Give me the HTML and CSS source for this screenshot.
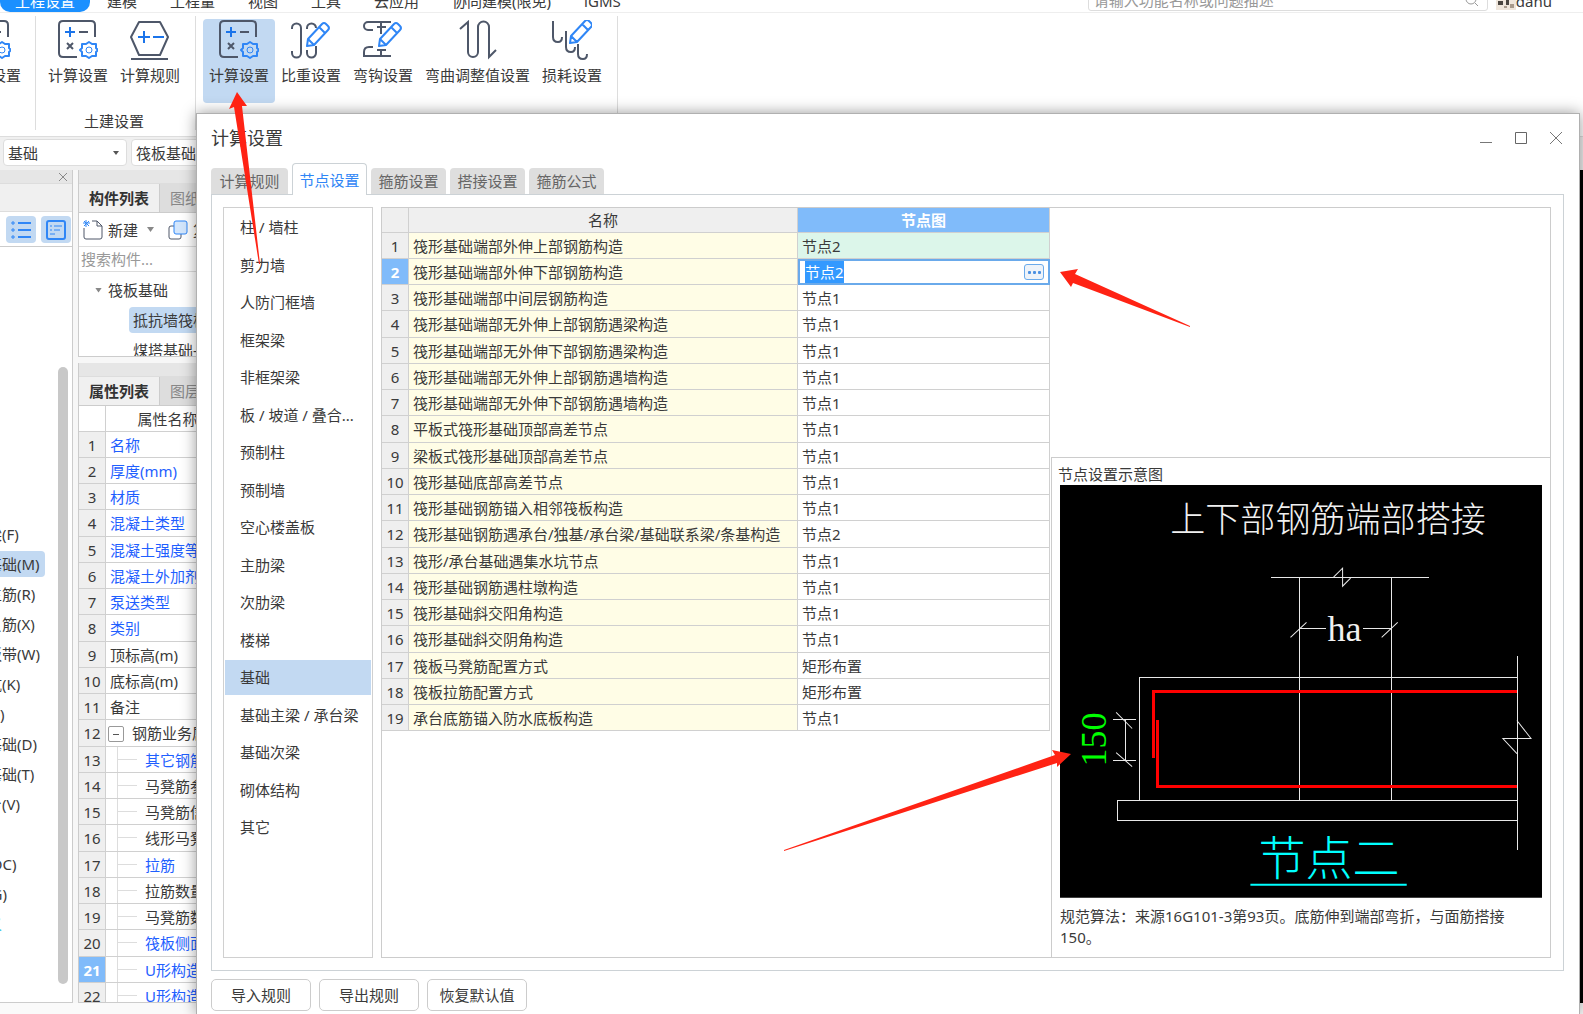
FILE: index.html
```html
<!DOCTYPE html>
<html lang="zh-CN">
<head>
<meta charset="utf-8">
<title>计算设置</title>
<link rel="stylesheet" href="styles.css">
</head>
<body>
<svg class="defs" width="0" height="0" aria-hidden="true">
  <symbol id="pencil" viewBox="0 0 40 40"><path d="M16 26l1-7L31 4q2-2 4 0l2 2q2 2 0 4L23 25zM17 19l6 6M28 7l6 6" fill="#fff" stroke="#2f86f6" stroke-width="2" stroke-linejoin="round"/></symbol>
  <symbol id="calc" viewBox="0 0 40 40">
    <path d="M37 17V5q0-4-4-4H5Q1 1 1 5v28q0 4 4 4h14M21 12h9M9 23l6 6M15 23l-6 6" fill="none" stroke="#4e5769" stroke-width="2"/>
    <path d="M12 7v10M7 12h10" stroke="#1b74ea" stroke-width="2"/>
    <path d="M31 22l3 2 4 0 0 4 2 2-2 2 0 4-4 0-3 2-3-2-4 0 0-4-2-2 2-2 0-4 4 0z" fill="none" stroke="#2f86f6" stroke-width="2" stroke-linejoin="round"/>
    <circle cx="31" cy="30" r="3" fill="none" stroke="#2f86f6" stroke-width="1"/>
  </symbol>
</svg>
<div class="app">
  <header class="menubar">
    <nav class="menu">
      <button class="menu-tab active">工程设置</button><button class="menu-tab">建模</button><button class="menu-tab">工程量</button><button class="menu-tab">视图</button><button class="menu-tab">工具</button><button class="menu-tab">云应用</button><button class="menu-tab">协同建模(限免)</button><button class="menu-tab">iGMS</button>
    </nav>
    <div class="finder">
      <input type="text" aria-label="搜索功能" placeholder="请输入功能名称或问题描述">
      <svg width="14" height="14" viewBox="0 0 14 14"><circle cx="6" cy="6" r="5" fill="none" stroke="#999"/><path d="M10 10l3 3" stroke="#999"/></svg>
    </div>
    <div class="user"><svg width="20" height="20" viewBox="0 0 20 20"><path fill="#efe6dc" d="M0 0h20v20H0z"/><path fill="#4a4540" d="M2 11h5v4H2zM10 10h3v5h-3z"/><path fill="#a89a8c" d="M14 14h4v4h-4zM8 16h3v2H8z"/></svg><span>danu</span></div>
  </header>

  <div class="ribbon">
    <section class="group cut"><div class="tools">
      <button class="tool"><svg width="40" height="40"><use href="#calc"/></svg>楼层设置</button>
    </div></section>
    <section class="group civil">
      <div class="tools">
        <button class="tool"><svg width="40" height="40"><use href="#calc"/></svg>计算设置</button>
        <button class="tool"><svg width="40" height="40" viewBox="0 0 40 40"><path d="M9 2h21l8 15-8 18H9L1 17zM1 39h37" fill="none" stroke="#4e5769" stroke-width="2" stroke-linejoin="round"/><path d="M14 11v12M8 17h12M23 17h11" stroke="#1b74ea" stroke-width="2"/></svg>计算规则</button>
      </div>
      <h2>土建设置</h2>
    </section>
    <section class="group wide"><div class="tools">
      <button class="tool selected"><svg width="40" height="40"><use href="#calc"/></svg>计算设置</button>
      <button class="tool"><svg width="40" height="40" viewBox="0 0 40 40"><path d="M1 9V8a4 4 0 0 1 9 0V33a4 4 0 0 1-9 0v-2M16 9V8a4 4 0 0 1 9 0M16 30v3a4 4 0 0 0 9 0v-7" fill="none" stroke="#4e5769" stroke-width="2"/><use href="#pencil" width="40" height="40"/></svg>比重设置</button>
      <button class="tool"><svg width="40" height="40" viewBox="0 0 40 40"><path d="M28 2H5a4 4 0 0 0 0 8h5M10 27H6q-5 0-5 5v4h27M18 2v12M14 7h9M14 30h9M18 30v6" fill="none" stroke="#4e5769" stroke-width="2"/><use href="#pencil" width="40" height="40"/></svg>弯钩设置</button>
      <button class="tool"><svg width="40" height="40" viewBox="0 0 40 40"><path d="M2 9l8-7v30a5 5 0 0 0 10 0V7a5 5 0 0 1 11 0v30l7-7" fill="none" stroke="#4e5769" stroke-width="2"/></svg>弯曲调整值设置</button>
      <button class="tool"><svg width="40" height="40" viewBox="0 0 40 40"><path d="M1 1v16q0 5 5 5 4 0 4-5M14 11v16q0 5 5 5 4 0 4-5M26 24v10q0 5 5 5 4 0 4-5" fill="none" stroke="#4e5769" stroke-width="2"/><use href="#pencil" x="2" y="-3" width="40" height="40"/></svg>损耗设置</button>
    </div></section>
  </div>

  <div class="filters">
    <select class="picker" aria-label="构件类型"><option>基础</option></select>
    <select class="picker" aria-label="构件"><option>筏板基础</option></select>
  </div>

  <div class="workspace">
    <aside class="navigator">
      <div class="bar"><button class="close" aria-label="关闭"><svg width="10" height="10" viewBox="0 0 10 10"><path d="M1 1l8 8M9 1L1 9" stroke="#888"/></svg></button></div>
      <div class="strip"></div>
      <div class="views">
        <button aria-label="列表"><svg width="20" height="18" viewBox="0 0 20 18"><path d="M7 2h13M7 9h13M7 16h13" stroke="#2f86f6" stroke-width="2"/><path d="M1 1h2v2H1zM1 8h2v2H1zM1 15h2v2H1z" fill="none" stroke="#2f86f6"/></svg></button>
        <button aria-label="详情"><svg width="20" height="20" viewBox="0 0 20 20"><rect x="1" y="1" width="18" height="18" rx="2" fill="none" stroke="#2f86f6" stroke-width="2"/><path d="M4 6h2M8 6h8M4 10h2M8 10h6M4 14h5" stroke="#2f86f6" stroke-width="1"/></svg></button>
      </div>
      <div class="types">
        <ul>
          <li>基础梁(F)</li><li class="on">筏板基础(M)</li><li>筏板主筋(R)</li><li>筏板负筋(X)</li><li>基础板带(W)</li><li>集水坑(K)</li><li>柱墩(Y)</li><li>独立基础(D)</li><li>条形基础(T)</li><li>桩承台(V)</li><li>桩(U)</li><li>承台(DC)</li><li>地沟(G)</li><li class="link">自定义</li>
        </ul>
        <div class="scrollbar"></div>
      </div>
    </aside>

    <main class="middle">
      <section class="components">
        <div class="bar"></div>
        <div class="tabs"><button class="on">构件列表</button><button>图纸管理</button></div>
        <div class="actions">
          <button><svg width="20" height="20" viewBox="0 0 20 20"><path d="M1 8v9q0 2 2 2h14q2 0 2-2V6l-5-5H9M14 1v5h5" fill="none" stroke="#4e5769" stroke-width="1"/><path d="M1 1l5 5M6 1L1 6M3 0v7M0 3h7" stroke="#2f86f6" stroke-width="1"/></svg>新建<i class="caret"></i></button>
          <button><svg width="20" height="20" viewBox="0 0 20 20"><path d="M6 6H3Q1 6 1 8v9q0 2 2 2h8q2 0 2-2v-3" fill="none" stroke="#4e5769" stroke-width="1"/><rect x="6" y="1" width="13" height="13" rx="2" fill="#d3e6fc" stroke="#2f86f6" stroke-width="1"/></svg>复制</button>
        </div>
        <input class="search" type="text" aria-label="搜索构件" placeholder="搜索构件...">
        <ul class="tree">
          <li><i class="caret"></i>筏板基础</li>
          <li class="leaf"><span class="on">抵抗墙筏板</span></li>
          <li class="leaf"><span>煤塔基础-1</span></li>
        </ul>
      </section>
      <section class="props">
        <div class="bar"></div>
        <div class="tabs"><button class="on">属性列表</button><button>图层管理</button></div>
        <div class="clip">
        <table class="sheet">
          <thead><tr><th class="n"></th><th>属性名称</th></tr></thead>
          <tbody>
            <tr><th>1</th><td class="b">名称</td></tr>
            <tr><th>2</th><td class="b">厚度(mm)</td></tr>
            <tr><th>3</th><td class="b">材质</td></tr>
            <tr><th>4</th><td class="b">混凝土类型</td></tr>
            <tr><th>5</th><td class="b">混凝土强度等级</td></tr>
            <tr><th>6</th><td class="b">混凝土外加剂</td></tr>
            <tr><th>7</th><td class="b">泵送类型</td></tr>
            <tr><th>8</th><td class="b">类别</td></tr>
            <tr><th>9</th><td>顶标高(m)</td></tr>
            <tr><th>10</th><td>底标高(m)</td></tr>
            <tr><th>11</th><td>备注</td></tr>
            <tr><th>12</th><td class="parent"><button class="fold" aria-label="折叠"></button>钢筋业务属性</td></tr>
            <tr><th>13</th><td class="b child">其它钢筋</td></tr>
            <tr><th>14</th><td class="child">马凳筋参数图</td></tr>
            <tr><th>15</th><td class="child">马凳筋信息</td></tr>
            <tr><th>16</th><td class="child">线形马凳筋</td></tr>
            <tr><th>17</th><td class="b child">拉筋</td></tr>
            <tr><th>18</th><td class="child">拉筋数量</td></tr>
            <tr><th>19</th><td class="child">马凳筋数量</td></tr>
            <tr><th>20</th><td class="b child">筏板侧面纵筋</td></tr>
            <tr class="cur"><th>21</th><td class="b child">U形构造封边</td></tr>
            <tr><th>22</th><td class="b child">U形构造封边</td></tr>
          </tbody>
        </table>
        </div>
      </section>
    </main>
    <div class="canvas"></div>
  </div>
  <footer class="status"></footer>
</div>

<div class="dialog" role="dialog" aria-label="计算设置">
  <div class="titlebar">
    <h1>计算设置</h1>
    <button aria-label="最小化"><svg width="14" height="14" viewBox="0 0 14 14"><path d="M1 11.500h12" stroke="#777" stroke-width="1"/></svg></button>
    <button aria-label="最大化"><svg width="14" height="14" viewBox="0 0 14 14"><path d="M1.500 1.500h11v11h-11z" fill="none" stroke="#666" stroke-width="1"/></svg></button>
    <button aria-label="关闭"><svg width="14" height="14" viewBox="0 0 14 14"><path d="M1 1l12 12M13 1L1 13" stroke="#777" stroke-width="1"/></svg></button>
  </div>
  <div class="dtabs"><button>计算规则</button><button class="on">节点设置</button><button>箍筋设置</button><button>搭接设置</button><button>箍筋公式</button></div>
  <div class="panel">
    <ul class="cats">
      <li>柱 / 墙柱</li><li>剪力墙</li><li>人防门框墙</li><li>框架梁</li><li>非框架梁</li><li>板 / 坡道 / 叠合...</li><li>预制柱</li><li>预制墙</li><li>空心楼盖板</li><li>主肋梁</li><li>次肋梁</li><li>楼梯</li><li class="on">基础</li><li>基础主梁 / 承台梁</li><li>基础次梁</li><li>砌体结构</li><li>其它</li>
    </ul>
    <div class="content">
      <table class="sheet nodes">
        <thead><tr><th class="n"></th><th>名称</th><th class="v">节点图</th></tr></thead>
        <tbody>
          <tr><th>1</th><td>筏形基础端部外伸上部钢筋构造</td><td class="green">节点2</td></tr>
          <tr class="cur"><th>2</th><td>筏形基础端部外伸下部钢筋构造</td><td class="edit"><div><input type="text" aria-label="节点图" value="节点2"><button aria-label="选择"><i></i><i></i><i></i></button></div></td></tr>
          <tr><th>3</th><td>筏形基础端部中间层钢筋构造</td><td>节点1</td></tr>
          <tr><th>4</th><td>筏形基础端部无外伸上部钢筋遇梁构造</td><td>节点1</td></tr>
          <tr><th>5</th><td>筏形基础端部无外伸下部钢筋遇梁构造</td><td>节点1</td></tr>
          <tr><th>6</th><td>筏形基础端部无外伸上部钢筋遇墙构造</td><td>节点1</td></tr>
          <tr><th>7</th><td>筏形基础端部无外伸下部钢筋遇墙构造</td><td>节点1</td></tr>
          <tr><th>8</th><td>平板式筏形基础顶部高差节点</td><td>节点1</td></tr>
          <tr><th>9</th><td>梁板式筏形基础顶部高差节点</td><td>节点1</td></tr>
          <tr><th>10</th><td>筏形基础底部高差节点</td><td>节点1</td></tr>
          <tr><th>11</th><td>筏形基础钢筋锚入相邻筏板构造</td><td>节点1</td></tr>
          <tr><th>12</th><td>筏形基础钢筋遇承台/独基/承台梁/基础联系梁/条基构造</td><td>节点2</td></tr>
          <tr><th>13</th><td>筏形/承台基础遇集水坑节点</td><td>节点1</td></tr>
          <tr><th>14</th><td>筏形基础钢筋遇柱墩构造</td><td>节点1</td></tr>
          <tr><th>15</th><td>筏形基础斜交阳角构造</td><td>节点1</td></tr>
          <tr><th>16</th><td>筏形基础斜交阴角构造</td><td>节点1</td></tr>
          <tr><th>17</th><td>筏板马凳筋配置方式</td><td>矩形布置</td></tr>
          <tr><th>18</th><td>筏板拉筋配置方式</td><td>矩形布置</td></tr>
          <tr><th>19</th><td>承台底筋锚入防水底板构造</td><td>节点1</td></tr>
        </tbody>
      </table>
      <div class="side">
        <figure class="schema">
          <h3>节点设置示意图</h3>
          <svg viewBox="0 0 481 412" role="img" aria-label="上下部钢筋端部搭接">
            <path fill="#000" d="M0 0h481v412H0z"/>
            <g fill="none" stroke="#e8e8e8" stroke-width="1">
              <path shape-rendering="crispEdges" d="M211 92h157M239.500 92v222M330.500 92v222M239 143h26M302 143h28M79.500 314V192.500H456M456.500 171v193M456 314.500H57.500v20H456M53 234.500h23M53 274.500h23M65.500 234v40"/>
              <path d="M273 92l9-9v18l8-8M230 152l16-15M321 152l16-15M456 235l14 18h-28l14 15M56 227l16 16M56 267l16 14"/>
            </g>
            <path d="M456 206H93v66M97 235v66h359" fill="none" stroke="#f00" stroke-width="3" shape-rendering="crispEdges"/>
            <text class="cad" x="110" y="47" font-size="35">上下部钢筋端部搭接</text>
            <text class="cad" x="267" y="156" font-size="36">ha</text>
            <text class="cad green" transform="translate(46 281) rotate(-90)" font-size="36">150</text>
            <text class="cad cyan" x="198" y="389" font-size="47">节点二</text>
            <path d="M190 399h156" stroke="#0ff" stroke-width="2"/>
          </svg>
          <figcaption>规范算法：来源16G101-3第93页。底筋伸到端部弯折，与面筋搭接150。</figcaption>
        </figure>
      </div>
    </div>
  </div>
  <div class="foot"><button>导入规则</button><button>导出规则</button><button>恢复默认值</button></div>
</div>

<svg class="marks" aria-hidden="true"><g fill="#ff2314">
  <path d="M237 92l10 14-5 0 18 158h-1L234 107l-5 2z"/>
  <path d="M1060 272l18-3-3 5 115 52v1l-117-44-2 4z"/>
  <path d="M1071 754l-14 13 0-4-273 88v-1l271-95-3-5z"/>
</g></svg>
</body>
</html>
```
FILE: styles.css
```css
* { box-sizing: border-box; }
body, h1, h2, h3, ul, figure { margin: 0; padding: 0; }
ul { list-style: none; }
body {
  font: 15px/22px "Noto Sans", "Noto Sans CJK SC", sans-serif;
  color: #3a3a3a;
  background: #fff;
  overflow: hidden;
}
button, input, select { font: inherit; color: inherit; border: 0; background: none; padding: 0; margin: 0; border-radius: 0; }
input { outline: 0; min-width: 0; }
svg { display: block; flex: none; }
.defs { position: absolute; }
.app { height: 100vh; display: flex; flex-direction: column; overflow: hidden; }

/* top menu, partly scrolled out above the window */
.menubar { height: 13px; flex: none; display: flex; align-items: flex-end; overflow: hidden; border-bottom: 1px solid #eee; padding-right: 31px; }
.menu { display: flex; flex: 1; gap: 1px; }
.menu-tab { height: 25px; padding: 3px 16px 0; line-height: 22px; white-space: nowrap; }
.menu-tab.active { background: #1b90ff; color: #fff; border-radius: 0 0 10px 10px; padding: 3px 15px 0; }
.finder { width: 400px; height: 26px; margin-bottom: 1px; padding: 3px 8px 0 5px; border: 1px solid #ddd; border-radius: 3px; display: flex; align-items: center; }
.finder input { flex: 1; }
::placeholder { color: #999; opacity: 1; }
.user { display: flex; align-items: center; height: 22px; margin-left: 8px; }
.user svg { margin-bottom: 3px; }

.ribbon { height: 123px; flex: none; display: flex; padding: 3px 0 6px; }
.group { border-right: 1px solid #ddd; padding: 3px 6px; display: flex; flex-direction: column; justify-content: space-between; }
.group.civil { padding-right: 9px; }
.group.wide { padding: 3px 9px 3px 7px; }
.group.cut { width: 36px; align-items: flex-end; overflow: hidden; }
.tools { display: flex; }
.tool { height: 84px; padding: 1px 6px 0; display: flex; flex-direction: column; align-items: center; gap: 4px; white-space: nowrap; border-radius: 4px; }
.cut .tool { margin-right: 2px; }
.tool.selected { background: #c2d9f2; }
.group h2 { font-size: 15px; font-weight: 400; line-height: 22px; text-align: center; margin-bottom: -5px; }

.filters { height: 34px; flex: none; display: flex; gap: 4px; padding: 2px 3px; border-top: 1px solid #ddd; background: #f0f0f0; }
.picker { appearance: none; width: 124px; height: 27px; padding-left: 4px; border: 1px solid #ddd; border-radius: 4px; background: #fff url("data:image/svg+xml,%3Csvg xmlns='http://www.w3.org/2000/svg' width='6' height='4'%3E%3Cpath d='M0 0h6L3 4z' fill='%23555'/%3E%3C/svg%3E") no-repeat right 7px center; }

.workspace { flex: 1; min-height: 0; display: flex; background: #f7f7f7; }
.bar { height: 14px; flex: none; background: #e6e6e6; border-bottom: 1px solid #ddd; }
.navigator { width: 73px; flex: none; display: flex; flex-direction: column; border-right: 1px solid #ccc; background: #fff; }
.navigator .bar { display: flex; justify-content: flex-end; align-items: center; padding-right: 4px; }
.strip { height: 28px; background: #f0f0f0; border-bottom: 1px solid #ddd; }
.views { display: flex; gap: 5px; padding: 4px 0 3px 6px; border-bottom: 1px solid #ccc; }
.views button { width: 30px; height: 27px; background: #c2d9f2; border-radius: 4px; display: flex; align-items: center; justify-content: center; }
.types { flex: 1; min-height: 0; display: flex; justify-content: space-between; overflow: hidden; border-bottom: 1px solid #ccc; }
.types ul { margin: 274px 0 0 -43px; }
.types li { height: 26px; margin-bottom: 4px; line-height: 26px; white-space: nowrap; border-radius: 4px; }
.types li.on { background: #c2d9f2; padding-right: 5px; }
.types li.link { color: #2fc3e8; }
.scrollbar { width: 10px; margin: 120px 4px 18px 0; border-radius: 5px; background: #c8c8c8; flex: none; }

.middle { width: 320px; flex: none; margin-left: 5px; display: flex; flex-direction: column; gap: 6px; }
.components { background: #fff; border: 1px solid #ccc; border-top: 0; height: 187px; overflow: hidden; flex: none; }
.tabs { display: flex; height: 29px; background: #ddd; border-bottom: 1px solid #ccc; }
.tabs button { width: 80px; color: #888; }
.tabs .on { width: 81px; background: #f0f0f0; color: #333; font-weight: 700; border-right: 1px solid #ccc; }
.actions { display: flex; gap: 14px; height: 34px; padding-left: 4px; border-bottom: 1px solid #ddd; }
.actions button { display: flex; align-items: center; gap: 5px; }
.caret { width: 7px; height: 5px; background: #888; clip-path: polygon(0 0, 100% 0, 50% 100%); flex: none; }
.actions .caret { margin-left: 4px; }
.search { display: block; width: 100%; height: 25px; padding-left: 2px; border-bottom: 1px solid #ddd; }
.tree { padding: 3px 0 0 16px; }
.tree li { height: 30px; display: flex; align-items: center; gap: 6px; }
.tree .leaf { padding-left: 34px; }
.tree span { line-height: 26px; padding: 0 4px; border-radius: 4px; width: 100%; }
.tree .on { background: #c2d9f2; }
.props { flex: 1; min-height: 0; display: flex; flex-direction: column; border-left: 1px solid #ccc; background: #fff; }
.props .tabs { flex: none; }
.clip { flex: 1; min-height: 0; overflow: hidden; border-bottom: 1px solid #ccc; }
.canvas { flex: 1; background: #000; }
.status { height: 11px; flex: none; background: #fafafa; }

/* spreadsheet-like grids */
.sheet { border-collapse: separate; border-spacing: 0; table-layout: fixed; width: 100%; flex: none; }
.sheet tr { height: 26px; }
.sheet tbody tr:nth-child(4n) { height: 27px; }
.sheet th, .sheet td { padding: 0 0 0 4px; border: solid #d0d0d0; border-width: 0 1px 1px 0; font-weight: 400; text-align: left; white-space: nowrap; line-height: 22px; overflow: hidden; }
.sheet th { background: #efefef; text-align: center; padding: 0; }
.sheet .n { width: 27px; }
.sheet .cur th { background: #80bbfa; color: #fff; font-weight: 700; }
.sheet .b { color: #1f5fff; }
.props thead th { background: #fff; padding-right: 168px; }
.props thead .n { padding: 0; }
.sheet .parent .fold { width: 16px; height: 16px; margin: 0 8px 0 -2px; vertical-align: -2px; border: 1px solid #999; border-radius: 2px; background: linear-gradient(#555, #555) no-repeat center / 6px 1px; }
.sheet .child { padding-left: 39px; background: linear-gradient(#ddd, #ddd) no-repeat 11px 0 / 1px 100%, linear-gradient(#ddd, #ddd) no-repeat 11px 12px / 20px 1px; }

.dialog { position: absolute; left: 196px; top: 113px; right: 3px; bottom: 0; display: flex; flex-direction: column; background: #fff; border: 1px solid #b0b0b0; border-bottom: 0; box-shadow: 0 0 14px rgba(0, 0, 0, .4); padding: 0 15px 0 14px; }
.titlebar { height: 49px; display: flex; align-items: center; gap: 21px; flex: none; padding: 0 1px 2px 0; }
.titlebar h1 { flex: 1; font-size: 18px; font-weight: 400; }
.titlebar button { display: flex; }
.dtabs { display: flex; align-items: flex-end; gap: 4px; flex: none; height: 32px; margin-bottom: -1px; z-index: 1; }
.dtabs button { height: 26px; margin-bottom: 1px; width: 75px; background: #dedede; color: #666; border-radius: 4px 4px 0 0; }
.dtabs button:first-child { width: 77px; }
.dtabs .on { height: 32px; margin-bottom: 0; background: #fff; color: #2f86f6; border: 1px solid #ccd2d6; border-bottom: 0; }
.panel { flex: 1; min-height: 0; display: flex; gap: 8px; padding: 12px 12px 12px 11px; border: 1px solid #ccd2d6; }
.cats { width: 150px; flex: none; border: 1px solid #d0d0d0; padding: 2px 1px; overflow: hidden; }
.cats li { height: 35px; line-height: 35px; margin-bottom: 3px; padding-left: 15px; white-space: nowrap; }
.cats li:nth-child(even) { margin-bottom: 2px; }
.cats .on { background: #c2d9f2; }
.content { flex: 1; min-width: 0; display: flex; align-items: stretch; border: 1px solid #ccc; }
.nodes { width: 668px; align-self: flex-start; }
.nodes thead tr { height: 25px; }
.nodes .v { width: 252px; background: #80bbfa; color: #fff; font-weight: 700; }
.nodes td:nth-child(2) { background: #fffde6; }
.nodes .green { background: #dcf6ea; }
.sheet .edit { padding: 0; border: 0; }
.edit div { height: 26px; border: 2px solid #6aaaeb; display: flex; justify-content: space-between; align-items: center; padding: 0 4px 0 5px; }
.edit input { width: 39px; height: 22px; background: #3399ff; color: #fff; }
.edit button { width: 20px; height: 16px; border: 1px solid #6aaaeb; border-radius: 3px; background: #eef3f9; display: flex; justify-content: center; gap: 2px; padding-top: 6px; }
.edit i { width: 3px; height: 3px; background: #4a90e2; border-radius: 1px; }
.side { flex: 1; min-width: 0; display: flex; flex-direction: column; justify-content: flex-end; }
.schema { border: solid #ccc; border-width: 1px 0 0 1px; padding: 5px 8px 9px; margin-left: 1px; }
.schema h3 { font-size: 15px; font-weight: 400; margin-left: -2px; line-height: 22px; }
.schema svg { width: 100%; height: auto; }
.schema figcaption { padding-top: 8px; line-height: 21px; padding-right: 24px; }
.cad { font-family: "Liberation Serif", "Noto Sans CJK SC", serif; font-weight: 300; fill: #f0f0f0; }
.cad.green { fill: #0f0; }
.cad.cyan { fill: #0ff; }
.foot { flex: none; display: flex; gap: 8px; height: 43px; padding-top: 8px; }
.foot button { width: 100px; height: 32px; border: 1px solid #ccc; border-radius: 5px; }
.marks { position: absolute; left: 0; top: 0; width: 100%; height: 100%; pointer-events: none; z-index: 2; }
```
